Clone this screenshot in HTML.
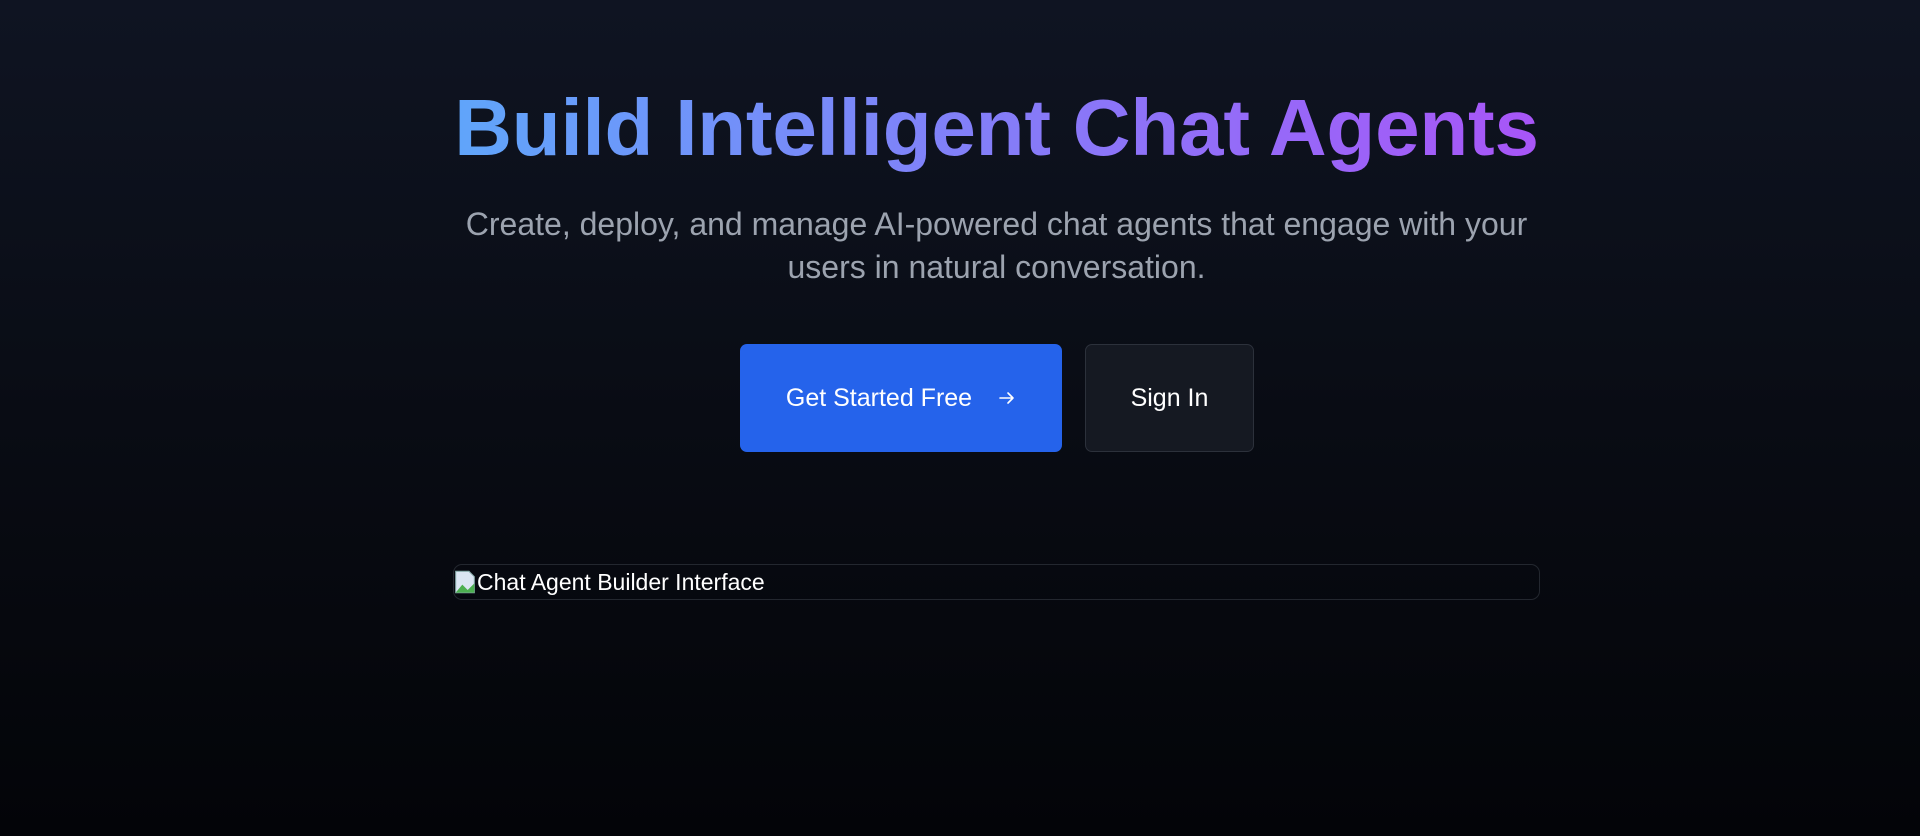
<!DOCTYPE html>
<html><head><meta charset="utf-8"><style>
html,body{margin:0;padding:0}
body{width:1920px;height:836px;overflow:hidden;background:linear-gradient(180deg,#0f1422 0%,#090c14 50%,#030408 100%);font-family:"Liberation Sans",sans-serif;position:relative}
.c{position:absolute;left:453px;width:1087px;text-align:center}
h1{top:78px;margin:0;font-size:80px;font-weight:700;line-height:100px;letter-spacing:-0.2px;white-space:nowrap}
h1 span{background:linear-gradient(90deg,#60a5fa,#a855f7);-webkit-background-clip:text;background-clip:text;color:transparent}
p{top:203px;margin:0;font-size:32px;line-height:43px;color:#9ca3af;white-space:nowrap}
.b1{position:absolute;left:740px;top:344px;width:322px;height:108px;background:#2563eb;border-radius:7px;color:#fff;font-size:25px;display:flex;align-items:center;justify-content:center;gap:26px}
.b2{position:absolute;left:1085px;top:344px;width:167px;height:106px;background:#151922;border:1px solid #2c313b;border-radius:7px;color:#fff;font-size:25px;display:flex;align-items:center;justify-content:center}
.img{position:absolute;left:453px;top:564px;width:1085px;height:34px;border:1px solid #23272f;border-radius:9px;color:#fff;font-size:23px;line-height:34px}
.ic{display:inline-block;width:22px;height:24px;vertical-align:-4px;margin-right:1px}
</style></head><body>
<h1 class="c"><span>Build Intelligent Chat Agents</span></h1>
<p class="c">Create, deploy, and manage AI-powered chat agents that engage with your<br>users in natural conversation.</p>
<div class="b1"><span>Get Started Free</span><svg width="18" height="18" viewBox="0 0 18 18"><path d="M2 9h13M10 4l5 5-5 5" stroke="#fff" stroke-width="1.6" fill="none" stroke-linecap="round" stroke-linejoin="round"/></svg></div>
<div class="b2">Sign In</div>
<div class="img"><svg class="ic" viewBox="0 0 16 18"><path d="M1 1h10l4 4v12H1z" fill="#dbe6f3" stroke="#8aa" stroke-width=".8"/><path d="M1 17l5-6 4 4 5-5v7z" fill="#4caf50"/></svg>Chat Agent Builder Interface</div>
</body></html>
